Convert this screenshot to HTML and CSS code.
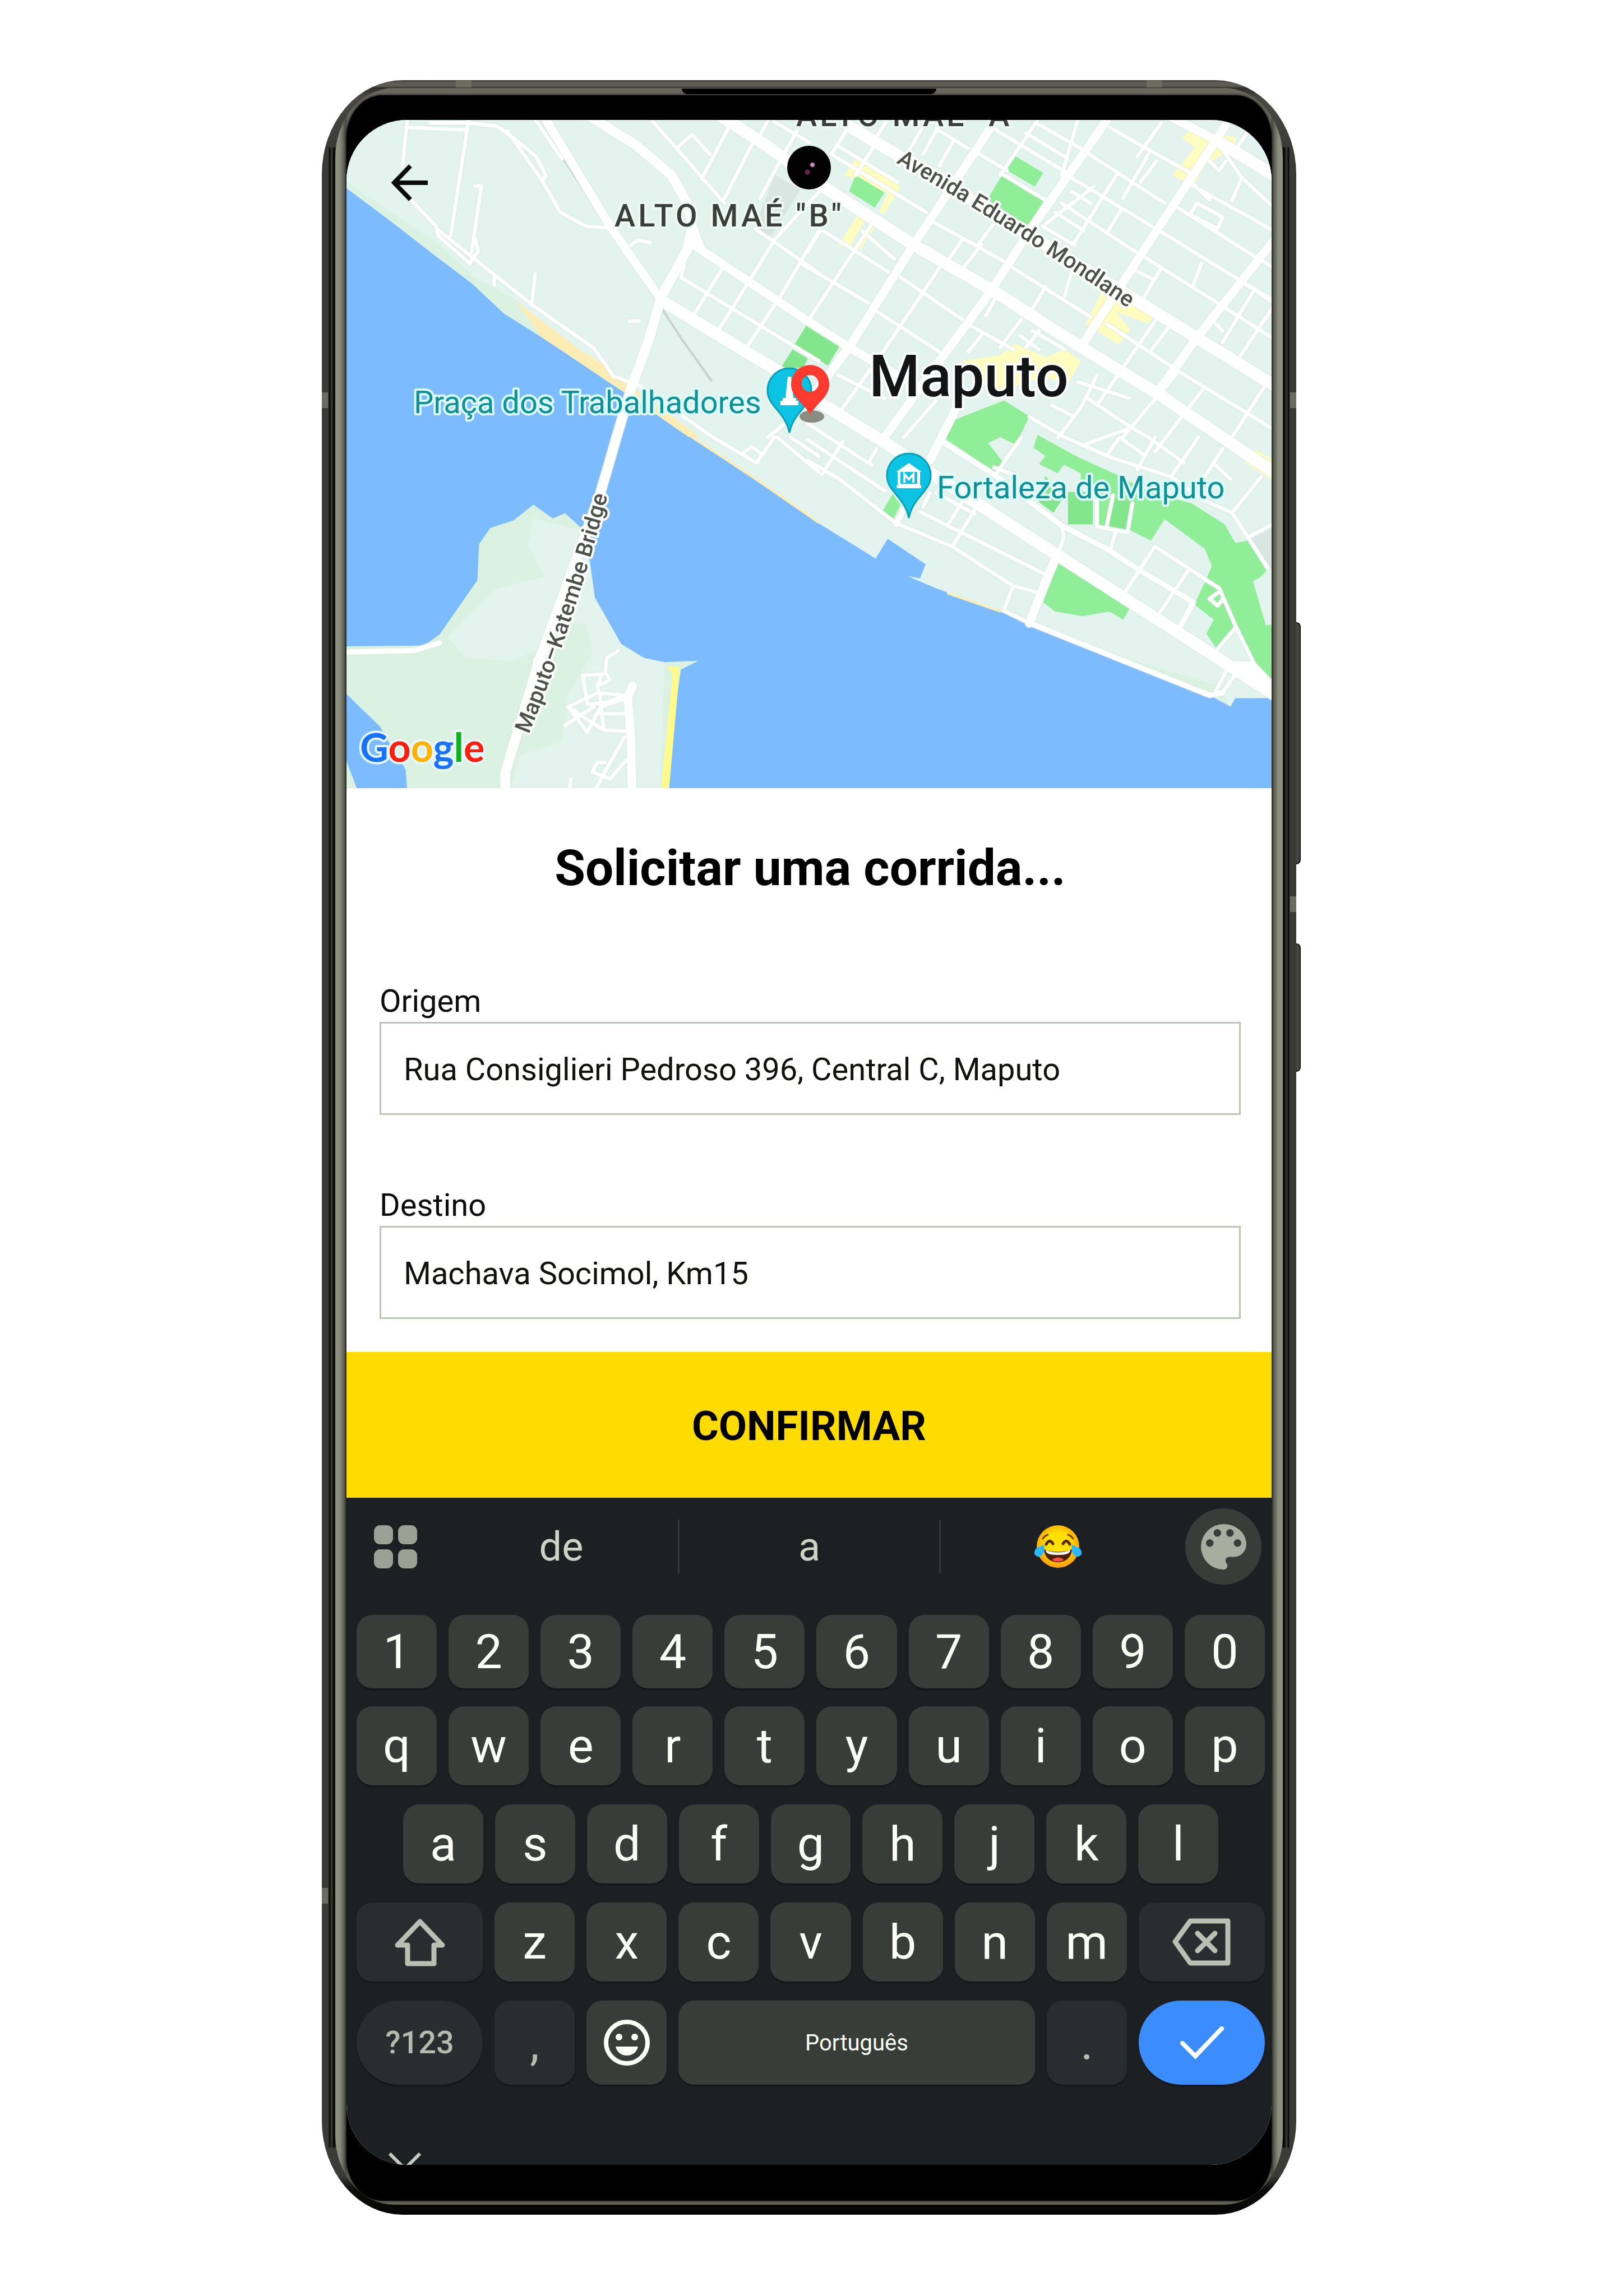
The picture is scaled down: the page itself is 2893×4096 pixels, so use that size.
FILE: index.html
```html
<!DOCTYPE html>
<html lang="pt">
<head>
<meta charset="utf-8">
<meta name="viewport" content="width=device-width, initial-scale=1">
<title>Solicitar uma corrida</title>
<link rel="stylesheet" href="styles.css">
</head>
<body>
<div class="stage">
<div class="phone">
  <span class="side-button volume"></span>
  <span class="side-button power"></span>
  <span class="band band-left-top"></span>
  <span class="band band-left-bottom"></span>
  <span class="band band-right-top"></span>
  <span class="band band-right-middle"></span>
  <span class="band-top band-top-left"></span>
  <span class="band-top band-top-right"></span>
  <div class="rim">
    <span class="speaker"></span>
    <div class="glass">
      <main class="screen">
        <section class="map" aria-label="Mapa de Maputo">
          <svg class="map-canvas" viewBox="618 214 1650 1192" preserveAspectRatio="xMidYMid slice">
            <defs>
              <path id="mondlane" d="M1598 290 Q1800 404 2030 562"/>
              <path id="katembe" d="M943 1310 Q1022 1120 1088 868"/>
            </defs>
            <rect x="600" y="200" width="1700" height="1220" fill="#7cbcfe"/>
            <g transform="translate(560 130) scale(.57398 .41454)">
              <!-- northern shore -->
              <path fill="#e3f4ee" d="M90 180V485L240 640 380 790 490 905 590 1035 710 1140 830 1250 920 1335 970 1380 1170 1568 1380 1758 1568 1938 1745 2090 1771 2128 1745 2090 1783 2005 1901 2115 1883 2176 1843 2165 1933 2218 2133 2318 2223 2378 2783 2678 2848 2728 2863 2691H2990V180Z"/>
              <path fill="#dbf2e2" d="M100 465L240 600 380 730 500 880 640 985 710 1140 590 1035 490 905 380 790 240 640 100 495Z"/>
              <path fill="#fdedb5" d="M625 980L710 1070 830 1195 900 1255 930 1310 975 1335 1200 1568H1165L970 1380 710 1140Z"/>
              <path class="beach-line" d="M1175 1568L1380 1755 1568 1935M1970 2240L2133 2318"/>
              <path fill="#dbf2e2" d="M2240 2378L2500 2510 2820 2640 2843 2720 2783 2678Z"/>
              <!-- Katembe shore -->
              <path fill="#dbf2e2" d="M90 2468L340 2465 390 2418 508 2183 513 2028 548 1958 620 1926 682 1858 742 1918 780 1895 830 1958 858 2108 873 2258 955 2458 1025 2518 1090 2536 1195 2530 1140 2568 1120 2768 1103 3090H90Z"/>
              <path fill="#e3f4ee" d="M680 1918L830 1968 858 2128 873 2268 955 2458 1025 2518 1090 2538 1075 3090H610L640 2938 770 2878 790 2678 865 2498 845 2368H760L700 2483 610 2533 470 2513 415 2428 560 2223 715 2168 665 2038Z"/>
              <path fill="#7cbcfe" d="M95 2665L205 2813 240 2898 285 2998 290 3090H136L95 2940Z"/>
              <path fill="#fffa8a" d="M1097 2556H1137L1103 3090H1078L1115 2588Z"/>
              <!-- parks -->
              <path fill="#84e68c" d="M1533 1080L1635 1172 1597 1260 1493 1170ZM1487 1190L1535 1230 1520 1270H1450Z"/>
              <g transform="translate(1533 0)">
                <path fill="#fffcc0" d="M150 370L290 490 240 605 222 600 250 520 115 440ZM158 605L185 615 133 750 97 745ZM195 640L213 655 165 760 150 755ZM1200 225L1250 255 1335 280 1325 310H1280L1295 350 1240 390 1200 490 1135 440 1205 320 1165 280ZM920 930L960 900 1095 1020 1060 1078 960 1030 1003 1105 968 1170 865 1080ZM645 1165L740 1225 800 1190 850 1240 810 1340 740 1310 660 1340 580 1410 550 1330 480 1240 600 1215ZM1395 1623L1443 1663V1753L1358 1678Z"/>
                <path fill="#d9e6e1" d="M1443 1960V2140L1380 2005ZM-100 440L-20 500-110 700-170 680Z"/>
                <path fill="#90ed98" d="M150 440L240 515 210 580 130 510ZM645 357L733 430 707 490 615 415ZM607 435L737 545 685 660 560 545ZM430 1575L457 1495 490 1475 612 1410 690 1478 648 1600 600 1568 562 1593 607 1673 585 1720Z"/>
              </g>
              <g transform="translate(1533 1568)" fill="#90ed98">
                <path d="M715-10L840 85 960 160 1060 235 1195 285 1297 375 1330 455 1368 445 1427 575 1405 605 1385 620 1425 810 1450 805V1058L1385 970 1330 810 1275 655 1240 610 1257 555 1235 480 1110 352 1068 445 1003 400 900 375V250L850 190V155L797 118 778 155 720 115 740 80 703 45Z"/>
                <path d="M1235 625L1275 655 1330 810 1272 910 1240 845 1263 785 1203 720ZM783 535L1003 733 982 785 938 750 855 770 770 750 733 710ZM265 245L290 290 268 350 233 320Z"/>
                <path fill="#84e68c" d="M810 235H887V375H810ZM740 165L790 270 765 325 720 280ZM950 265L1010 280 995 395 938 380Z"/>
              </g>
              <path class="rail" d="M775 370L915 665 1060 970 1140 1140 1235 1325"/>
              <!-- streets -->
              <g class="roads">
                <path class="minor" d="M290 200L275 400M290 235L475 245M480 205L425 700M360 215H480L570 230 620 280 690 360 720 440 710 465 600 250M710 465L765 600 845 660 920 668M500 487H520L490 770M300 545L380 660 385 700 485 820 495 790M380 670L680 1000 870 1185 930 1305 1010 1345 1240 1568 1375 1678 1430 1568M500 710L510 770 490 800M560 885V910M687 865L677 1000M985 740L1005 720 1045 730M690 205L770 370M1050 205L1130 330 1275 560M1130 320L1175 265 1230 350M1290 230L1205 455M1360 310L1275 540M1410 205L1385 270M1500 250L1385 540M1590 480L1430 720 1355 890 1260 1100M1265 850L1185 1030M1568 680L1450 960 1345 1180M1140 880L1568 1240M1150 830L1140 880M1370 670L1568 860M980 1068H1010M1430 210L1540 300M1330 1640L1360 1608 1390 1640M1440 1568L1568 1718M1480 1568L1568 1648M1410 1568L1490 1480"/>
                <g transform="translate(1533 0)">
                  <path class="minor" d="M75 350L370 600M90 310L280 470M400 240L500 325M530 345L620 420M600 430L737 545M580 240L800 425M710 215L850 325M680 260L800 360M940 235L1040 315 1190 430M870 345L1110 560M820 450L1070 660M790 560L1020 770M730 660L830 740M770 600L860 680M820 510L880 560M1140 570L1390 790 1450 840M1095 680L1335 885 1450 980M1045 790L1280 995 1450 1145M1020 850L1070 885M1190 480L1450 680M1210 560L1290 620 1275 670 1190 610ZM1200 480L1250 545M1290 330L1350 450 1320 550M1350 450L1450 580M1250 380L1280 420 1300 380"/>
                  <path class="minor" d="M125 240L75 350M360 230L300 370M455 290L410 400M400 250L360 350M245 210L200 310M715 205L600 440M840 205L790 440M1100 215L1025 360M1085 380L1035 470M1060 350L980 540M890 490L740 650M960 440L830 730M975 590L930 690M1225 820L1200 910M1095 850L1040 980M1030 1170L975 1280M820 860L800 960M740 920L690 1040M665 1060L600 1180M480 720L440 800M540 740L490 830M590 630L530 740M390 640L610 810M640 840L880 1050M290 880L480 1060M220 1030L410 1200M-20 820L190 990M50 680L250 855M170 680L270 800M40 680L0 770M200 650L10 1050M410 840L240 1190 90 1480M95 1300L240 1400M510 1090L640 1190M540 1130L500 1200M700 1110L800 1190M720 1110L680 1180M660 1130L720 1190M580 980L555 1045M210 310L150 440M1380 230L1340 310"/>
                  <path class="minor" d="M1155 1285L1450 1535M900 1300L850 1440 780 1568M960 1310L900 1430M840 1330L1000 1400M1390 930L1290 1160M1450 1000L1340 1230M1350 900L1450 990M1270 1080L1290 1110M1080 1070L1030 1170M1120 1100L1070 1190M930 1080L1150 1280M1150 1290L980 1568M1230 1360L1080 1630M1420 1350L1320 1568M690 1480L800 1568 950 1658 1130 1738 1230 1838 1320 1893 1430 2128M760 1430L830 1480M870 1400L1000 1520 1060 1568 1170 1678M400 1410L300 1568M860 1600L1000 1530"/>
                  <path class="medium" d="M930 205L700 660 570 940 400 1260 240 1568M570 235L330 740 130 1180-5 1430M1300 225L1000 860 850 1180M1450 720L1210 1140 1085 1380M-353 740L20 1085 140 1190 380 1380M1130 190L1270 290M460 1450L380 1670"/>
                  <path class="major" d="M-263 190L-130 310 50 490 330 740 580 940 850 1180 1100 1390 1450 1720M130 230L300 370 1000 960 1210 1140 1450 1345M1270 290L1450 440M-453 980L-83 1290 40 1420 240 1590 500 1828 780 2078 1300 2540 1450 2675"/>
                </g>
                <g transform="translate(1533 1568)">
                  <path class="minor" d="M0 100L100 180 275 370 450 470 640 640 710 665M640 640L610 745 690 800M450 470L530 290M350 320L740 590M110 20L45 160M0 10L240 230M215 50L190 110M0-60L200 120M790 380L797 430 780 500M1080 470L990 660M1080 470L1280 650 1330 810 1390 980M1185 570L1095 755M960 400L940 490M900 270V385L995 410 1010 285M950 250L930 385M665 0L585 160M1320 325L1410 170M1370 430L1450 370M970 0L930 80M1080 0L1025 140M1215 0L1130 170M980 10L1050 80M1290 50L1230 180M1260 110L1315 180M1275 670L1250 695 1275 725 1290 700M1275 910L1330 820M1300 1010L1270 1090M380 240L360 300M480 280L440 370M400 240L520 330M580 130L640 160M1340 1000L1290 1100"/>
                  <path class="street" d="M420 20L580 160 790 380 930 480 1030 570 1200 710 1160 810M700 805L1250 1110 1290 1100M300 310L275 375"/>
                  <path class="medium" d="M775 510L740 620 690 800"/>
                  <path class="major" d="M1320 990L1380 990 1450 1090"/>
                </g>
                <g transform="translate(0 1568)">
                  <path class="street" d="M90 925L310 918 390 885"/>
                  <path class="minor" d="M687 955L680 1050M945 920L910 950 905 1010 920 1045 880 1070M890 1120L880 1070 895 1020 835 1025 850 1150 910 1140 970 1110 880 1100 790 1160 850 1270 890 1160 960 1130M780 1240L870 1160M800 1170L900 1260 970 1265M890 1190H970M965 1290L900 1450 870 1530M970 1390L920 1470 865 1440 880 1400 905 1400M798 1470L795 1530M890 1130L900 1260"/>
                  <path class="medium" d="M990 1070L975 1120 985 1300 988 1530"/>
                </g>
                <path class="medium" d="M720 200L920 660 1080 980M1175 660L1200 750"/>
                <path class="bridge" d="M860 190L1000 310 1110 440 1160 560 1175 660 1160 760 1080 960 1040 1150 985 1360 940 1568 890 1808 700 2528 630 2848 595 3008V3090"/>
              </g>
            </g>
            <g class="halo">
              <text class="district" x="1096" y="404">ALTO MAÉ "B"</text>
              <text class="district" x="1420" y="225">ALTO MAÉ "A"</text>
              <text class="street-name"><textPath href="#mondlane">Avenida Eduardo Mondlane</textPath></text>
              <text class="street-name"><textPath href="#katembe">Maputo–Katembe Bridge</textPath></text>
              <text class="city" x="1550" y="707">Maputo</text>
              <text class="poi" x="738" y="737">Praça dos Trabalhadores</text>
              <text class="poi" x="1671" y="889">Fortaleza de Maputo</text>
              <text class="brand" x="642" y="1359"><tspan fill="#1a73ff">G</tspan><tspan fill="#fb1f0c">o</tspan><tspan fill="#ffb300">o</tspan><tspan fill="#1a73ff">g</tspan><tspan fill="#12b01f">l</tspan><tspan fill="#fb1f0c">e</tspan></text>
            </g>
            <g fill="#0cc3e3" stroke="#0a9fb4" stroke-width="3">
              <path d="M1408 657a39 39 0 0 1 39 40c0 28-31 36-39 75-8-39-39-47-39-75a39 39 0 0 1 39-40Z"/>
              <path d="M1621 809a39 39 0 0 1 39 40c0 28-31 36-39 75-8-39-39-47-39-75a39 39 0 0 1 39-40Z"/>
            </g>
            <path fill="#fff" d="M1405 672h6l4 38h5v5h4v8h-32v-8h4v-5h5Z"/>
            <path fill="#fff" d="M1621 826L1644 842H1641V866H1643V871H1599V866H1601V842H1598Z"/>
            <path fill="#0cc3e3" d="M1606 842H1636V863H1606Z"/>
            <path fill="none" stroke="#fff" stroke-width="4" d="M1613 861V846L1621 855 1629 846V861"/>
            <ellipse cx="1448" cy="743" rx="22" ry="11" fill="#8b8d82"/>
            <path fill="#ff3b30" fill-rule="evenodd" d="M1445 651a34 34 0 0 1 34 35c0 22-21 32-34 53-13-21-34-31-34-53a34 34 0 0 1 34-35Zm0 18a15 15 0 1 0 0 30 15 15 0 0 0 0-30Z"/>
          </svg>
          <button class="back" type="button" aria-label="Voltar">
            <svg viewBox="0 0 66 66"><path d="M65 33H6M34 3L5 33 34 63" fill="none" stroke="#0c0c0c" stroke-width="8"/></svg>
          </button>
          <span class="camera"></span>
        </section>

        <form class="ride">
          <div class="fields">
            <h1>Solicitar uma corrida...</h1>
            <div class="field">
              <label for="origem">Origem</label>
              <input id="origem" type="text" value="Rua Consiglieri Pedroso 396, Central C, Maputo">
            </div>
            <div class="field">
              <label for="destino">Destino</label>
              <input id="destino" type="text" value="Machava Socimol, Km15">
            </div>
          </div>
          <button class="confirm" type="button">CONFIRMAR</button>
        </form>

        <section class="keyboard" aria-label="Teclado">
          <div class="suggestions">
            <button type="button" aria-label="Menu">
              <svg class="grid-icon" viewBox="0 0 77 77" fill="#9da195"><rect width="34" height="34" rx="11"/><rect x="43" width="34" height="34" rx="11"/><rect y="43" width="34" height="34" rx="11"/><rect x="43" y="43" width="34" height="34" rx="11"/></svg>
            </button>
            <button type="button">de</button>
            <button class="middle" type="button">a</button>
            <button type="button" aria-label="Lágrimas de alegria">
              <svg class="emoji" viewBox="0 0 84 76">
                <defs><radialGradient id="face" cy=".45" r=".55"><stop offset=".5" stop-color="#ffe000"/><stop offset="1" stop-color="#ff9d0a"/></radialGradient></defs>
                <circle cx="42" cy="38" r="38" fill="url(#face)"/>
                <path fill="#4a2108" d="M17 43Q42 52 67 43C66 57 56 66 42 66S18 57 17 43Z"/>
                <path fill="#fff" d="M20 44Q42 53 64 44C64 50 58 53 42 53S20 50 20 44Z"/>
                <path fill="#ff4b46" d="M31 62Q42 53 53 62 42 68 31 62Z"/>
                <path fill="none" stroke="#5a2a06" stroke-width="5" stroke-linecap="round" d="M21 34Q27 23 33 33M51 33Q57 23 63 34"/>
                <path fill="none" stroke="#7a3d04" stroke-width="3" stroke-linecap="round" d="M15 24Q19 18 24 17M69 24Q65 18 60 17"/>
                <path fill="#2bb8ff" d="M17 35C19 47 15 56 7 56-2 55-2 45 5 40ZM67 35C65 47 69 56 77 56 86 55 86 45 79 40Z"/>
              </svg>
            </button>
            <button type="button" aria-label="Tema">
              <span class="theme"><svg viewBox="3 3 18 18"><path fill="#a8ad9f" d="M12 3a9 9 0 0 0 0 18c.83 0 1.500-.67 1.500-1.500 0-.39-.15-.74-.39-1.010-.23-.26-.38-.61-.38-.99 0-.83.67-1.500 1.500-1.500H16a5 5 0 0 0 5-5c0-4.420-4.030-8-9-8Zm-5.500 9a1.500 1.500 0 1 1 0-3 1.500 1.500 0 0 1 0 3Zm3-4a1.500 1.500 0 1 1 0-3 1.500 1.500 0 0 1 0 3Zm5 0a1.500 1.500 0 1 1 0-3 1.500 1.500 0 0 1 0 3Zm3 4a1.500 1.500 0 1 1 0-3 1.500 1.500 0 0 1 0 3Z"/></svg></span>
            </button>
          </div>
          <div class="keys">
            <div class="row digits">
              <button type="button">1</button><button type="button">2</button><button type="button">3</button><button type="button">4</button><button type="button">5</button><button type="button">6</button><button type="button">7</button><button type="button">8</button><button type="button">9</button><button type="button">0</button>
            </div>
            <div class="row">
              <button type="button">q</button><button type="button">w</button><button type="button">e</button><button type="button">r</button><button type="button">t</button><button type="button">y</button><button type="button">u</button><button type="button">i</button><button type="button">o</button><button type="button">p</button>
            </div>
            <div class="row inset">
              <button type="button">a</button><button type="button">s</button><button type="button">d</button><button type="button">f</button><button type="button">g</button><button type="button">h</button><button type="button">j</button><button type="button">k</button><button type="button">l</button>
            </div>
            <div class="row">
              <button class="wide dim" type="button" aria-label="Maiúsculas">
                <svg class="shift" viewBox="0 0 92 87"><path fill="none" stroke="#b9c0b2" stroke-width="9" stroke-linejoin="round" d="M46 7L86 49H71V82H24V49H6Z"/></svg>
              </button>
              <button type="button">z</button><button type="button">x</button><button type="button">c</button><button type="button">v</button><button type="button">b</button><button type="button">n</button><button type="button">m</button>
              <button class="wide dim" type="button" aria-label="Apagar">
                <svg class="erase" viewBox="0 0 104 85"><path fill="none" stroke="#b9c0b2" stroke-width="9" stroke-linejoin="round" stroke-linecap="round" d="M32 5H99V80H32L5 42ZM45 27L76 58M76 27L45 58"/></svg>
              </button>
            </div>
            <div class="row bottom">
              <button class="wide dim round symbols" type="button">?123</button>
              <button class="dim" type="button">,</button>
              <button type="button" aria-label="Emoji">
                <svg class="smile" viewBox="0 0 82 82"><circle cx="41" cy="41" r="37" fill="none" stroke="#fbfff5" stroke-width="8"/><circle cx="27" cy="31" r="6" fill="#fbfff5"/><circle cx="55" cy="31" r="6" fill="#fbfff5"/><path fill="#fbfff5" d="M21 48H61C59 58 51 64 41 64S23 58 21 48Z"/></svg>
              </button>
              <button class="space" type="button">Português</button>
              <button class="dim" type="button">.</button>
              <button class="wide round enter" type="button" aria-label="Concluir">
                <svg class="check" viewBox="0 0 80 60"><path fill="none" stroke="#fff" stroke-width="8" stroke-linecap="round" d="M5 31L28 54 75 5"/></svg>
              </button>
            </div>
          </div>
          <div class="nav">
            <button type="button" aria-label="Ocultar teclado">
              <svg class="chevron" viewBox="0 0 58 34"><path fill="none" stroke="#c6cbbf" stroke-width="6" d="M2 2L29 29 56 2"/></svg>
            </button>
          </div>
        </section>
      </main>
    </div>
  </div>
</div>
</div>
</body>
</html>
```
FILE: styles.css
```css
* { box-sizing: border-box; }

body {
  margin: 0;
  background: #fff;
  font-family: Roboto, "Liberation Sans", sans-serif;
  color: #0d0d0d;
}

button {
  margin: 0;
  padding: 0;
  border: 0;
  background: none;
  font: inherit;
  color: inherit;
}

svg { display: block; }

.stage { padding: 143px 581px 144px 574px; }

/* Device body */
.phone {
  position: relative;
  padding: 14px 24px 18px;
  border-radius: 144px / 168px;
  background:
    linear-gradient(90deg, transparent 12px, #0b0b0a 13px, #0b0b0a 15px, #33342f 16px, #33342f 19px, #0b0b0a 20px, #0b0b0a 24px, transparent 25px) left 0 top 120px / 30px calc(100% - 240px) no-repeat,
    linear-gradient(270deg, transparent 12px, #0b0b0a 13px, #0b0b0a 15px, #33342f 16px, #33342f 19px, #0b0b0a 20px, #0b0b0a 24px, transparent 25px) right 0 top 120px / 30px calc(100% - 240px) no-repeat,
    linear-gradient(180deg, #3b3c37 0, #5f5f55 5px, #5a5a50 11px, #2f2f2b 14px, #4a4a43 30px, #3a3b37 120px, #3a3b37 calc(100% - 70px), #0c0c0b calc(100% - 45px), #050505 100%);
}

/* Polished edge around the glass */
.rim {
  position: relative;
  overflow: hidden;
  padding: 13px 20px 7px;
  border-radius: 104px / 124px;
  background:
    linear-gradient(90deg, #8f9183 0, #8a8c7e 8px, #45453c 20px, transparent 21px, transparent calc(100% - 21px), #45453c calc(100% - 20px), #8a8c7e calc(100% - 8px), #8f9183 100%) 0 50px / 100% calc(100% - 80px) no-repeat,
    #67675c;
}

.glass {
  padding: 44px 0 64px;
  border-radius: 64px / 76px;
  background: #000;
  box-shadow: 0 0 5px #000;
}

.screen {
  overflow: hidden;
  border-radius: 108px;
  background: #fff;
}

.speaker {
  position: absolute;
  top: 1px;
  left: 50%;
  width: 454px;
  height: 10px;
  margin-left: -227px;
  border-radius: 0 0 12px 12px;
  background: #000;
}

.side-button {
  position: absolute;
  left: 100%;
  width: 8px;
  border: 2px solid #161714;
  border-left: 0;
  border-radius: 0 8px 8px 0;
  background: #45463f;
}
.volume { top: 967px; height: 432px; }
.power { top: 1540px; height: 229px; }

.band { position: absolute; width: 11px; height: 28px; background: #6b6b60; }
.band-left-top { left: 0; top: 557px; }
.band-left-bottom { left: 0; top: 3225px; }
.band-right-top { right: 0; top: 557px; }
.band-right-middle { right: 0; top: 1456px; }

.band-top { position: absolute; top: 1px; width: 28px; height: 12px; background: #6b6b60; }
.band-top-left { left: 239px; }
.band-top-right { right: 239px; }

/* Map */
.map { position: relative; }
.map-canvas { width: 100%; aspect-ratio: 1650 / 1192; }

.roads path, .rail, .beach-line {
  fill: none;
  stroke: #fff;
  stroke-linecap: round;
  stroke-linejoin: round;
  vector-effect: non-scaling-stroke;
}
.roads { filter: drop-shadow(0 0 2px #c4d6cf); }
.roads .minor { stroke-width: 7px; }
.roads .street { stroke-width: 10px; }
.roads .medium { stroke-width: 16px; }
.roads .bridge { stroke-width: 18px; }
.roads .major { stroke-width: 22px; }
.rail { stroke: #c6d2cc; stroke-width: 4px; }
.beach-line { stroke: #fdedb5; stroke-width: 4px; }

.halo text { paint-order: stroke; stroke: #fff; stroke-width: 8px; stroke-linejoin: round; }
.halo .district { font-size: 56px; font-weight: 500; letter-spacing: 5px; fill: #3a3f3b; stroke: #eef8f4; }
.halo .street-name { font-size: 40px; font-weight: 500; fill: #4d5149; }
.halo .city { font-size: 104px; font-weight: 500; fill: #121416; }
.halo .poi { font-size: 56px; fill: #0e9298; stroke: #dffafa; }
.halo .brand { font-family: Lato, sans-serif; font-size: 70px; font-weight: 700; stroke: #e6f6fb; }

.back { position: absolute; top: 79px; left: 80px; width: 66px; height: 66px; }

.camera {
  position: absolute;
  top: 46px;
  left: 50%;
  width: 78px;
  height: 78px;
  margin-left: -39px;
  border-radius: 50%;
  background:
    radial-gradient(circle at 45px 34px, #d58ac0 3px, transparent 5px),
    radial-gradient(circle at 36px 47px, #6b2450 3px, transparent 6px),
    #020203;
}

/* Ride form */
.fields { padding: 93px 55px 59px 59px; }

h1 {
  margin: 0 0 155px;
  font-size: 89px;
  font-weight: 700;
  line-height: 100px;
  text-align: center;
  color: #000;
}

.field { display: flex; flex-direction: column; gap: 5px; }
.field + .field { margin-top: 129px; }
.field label { font-size: 56px; line-height: 64px; }
.field input {
  width: 100%;
  height: 166px;
  padding: 4px 40px 0;
  border: 3px solid #bcc6b4;
  border-radius: 0;
  background: #fff;
  font: inherit;
  font-size: 56px;
  color: #11120e;
}

.confirm {
  display: block;
  width: 100%;
  height: 260px;
  padding-top: 4px;
  background: #ffdc00;
  font-size: 73px;
  font-weight: 700;
  color: #000;
}

/* Keyboard */
.keyboard { background: #1c2022; }

.suggestions {
  display: grid;
  grid-template-columns: 175fr 416fr 469fr 418fr 172fr;
  align-items: center;
  height: 174px;
  font-size: 72px;
  color: #ced3c6;
}
.suggestions button { display: flex; align-items: center; justify-content: center; height: 96px; }
.suggestions .middle { border: solid #34383a; border-width: 0 3px; }
.grid-icon { width: 77px; height: 77px; }
.emoji { width: 84px; height: 76px; }
.theme {
  display: flex;
  flex: none;
  align-items: center;
  justify-content: center;
  width: 136px;
  height: 136px;
  border-radius: 50%;
  background: #393d39;
}
.theme svg { width: 81px; height: 81px; }

.keys {
  display: flex;
  flex-direction: column;
  gap: 34px;
  padding: 35px 12px 0 18px;
}
.row { display: flex; gap: 21px; height: 141px; }
.digits { height: 131px; margin-bottom: -2px; }
.inset { padding: 0 83px; }
.bottom { height: 150px; }

.row button {
  display: flex;
  flex: 143 1 0;
  min-width: 0;
  align-items: center;
  justify-content: center;
  border-radius: 28px;
  background: #393d39;
  box-shadow: 0 3px 2px #13171a;
  font-size: 86px;
  color: #fbfff5;
}
.row .wide { flex-grow: 225; }
.row .dim { background: #282d30; color: #b4baac; }
.row .round { border-radius: 75px; }
.row .symbols { font-size: 56px; font-weight: 500; }
.row .space { flex-grow: 636; font-size: 40px; }
.row .enter { background: #3a8cff; }

.shift { width: 92px; height: 87px; }
.erase { width: 104px; height: 85px; }
.smile { width: 82px; height: 82px; }
.check { width: 80px; height: 60px; }

.nav { height: 143px; padding: 121px 0 0 75px; overflow: hidden; }
.chevron { width: 58px; height: 34px; }
```
